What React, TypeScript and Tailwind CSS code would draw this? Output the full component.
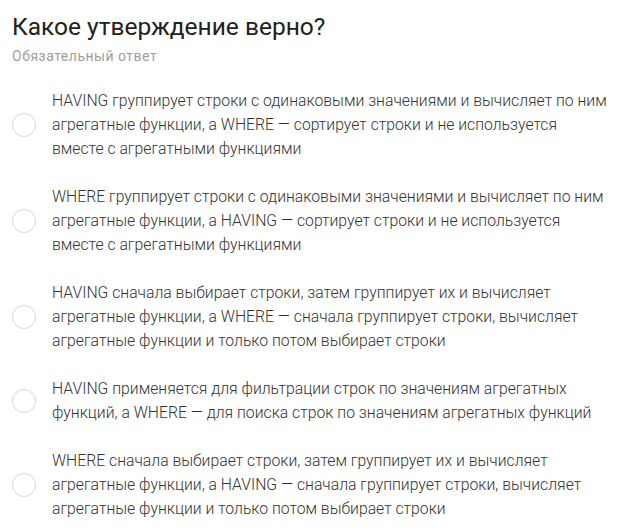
import React from "react";

const options: string[][] = [
  [
    "HAVING группирует строки с одинаковыми значениями и вычисляет по ним",
    "агрегатные функции, а WHERE — сортирует строки и не используется",
    "вместе с агрегатными функциями",
  ],
  [
    "WHERE группирует строки с одинаковыми значениями и вычисляет по ним",
    "агрегатные функции, а HAVING — сортирует строки и не используется",
    "вместе с агрегатными функциями",
  ],
  [
    "HAVING сначала выбирает строки, затем группирует их и вычисляет",
    "агрегатные функции, а WHERE — сначала группирует строки, вычисляет",
    "агрегатные функции и только потом выбирает строки",
  ],
  [
    "HAVING применяется для фильтрации строк по значениям агрегатных",
    "функций, а WHERE — для поиска строк по значениям агрегатных функций",
  ],
  [
    "WHERE сначала выбирает строки, затем группирует их и вычисляет",
    "агрегатные функции, а HAVING — сначала группирует строки, вычисляет",
    "агрегатные функции и только потом выбирает строки",
  ],
];

export default function App() {
  return (
    <div
      className="w-[628px] h-[530px] bg-white px-3 pt-[11px] overflow-hidden"
      style={{ fontFamily: "Roboto, 'Noto Sans', sans-serif" }}
    >
      <h1 className="text-[24.5px] leading-[32px] text-[#212121] font-normal">
        Какое утверждение верно?
      </h1>
      <div className="text-[14px] leading-[20px] text-[#9e9e9e] tracking-[0.5px] mt-[3px]">
        Обязательный ответ
      </div>
      <div className="mt-[23px] flex flex-col gap-6">
        {options.map((lines, i) => (
          <label key={i} className="flex items-center gap-[16px]">
            <span className="w-6 h-6 shrink-0 rounded-full border border-[#d6d6d6]" />
            <span className="flex flex-col text-[15.75px] leading-[24px] text-[#333333] font-light">
              {lines.map((l, j) => (
                <span key={j} className="whitespace-nowrap">
                  {l}
                </span>
              ))}
            </span>
          </label>
        ))}
      </div>
    </div>
  );
}
